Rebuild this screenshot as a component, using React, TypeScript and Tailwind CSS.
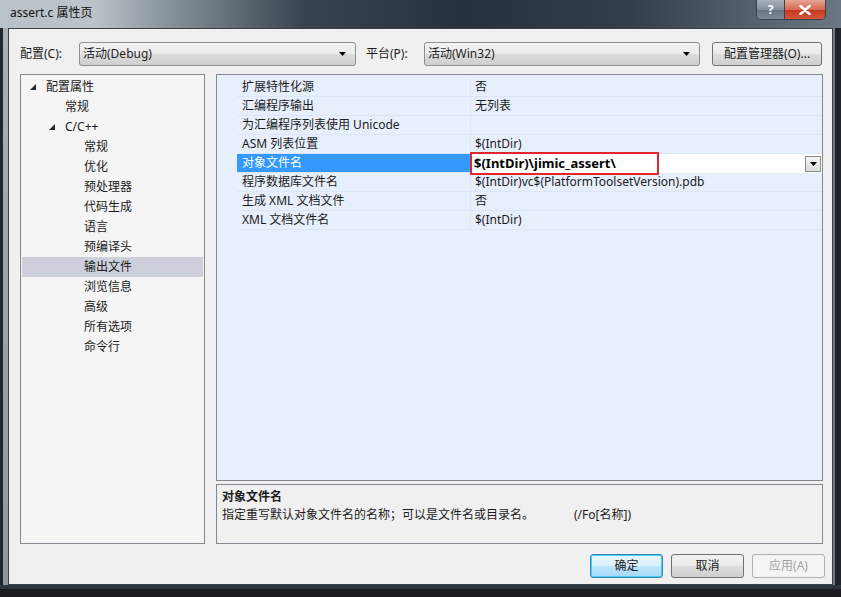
import React from 'react';

const font = { fontFamily: '"Noto Sans", "Noto Sans CJK SC", sans-serif' };

type TreeItem = { label: string; indent: number; arrow?: boolean; selected?: boolean };

const tree: TreeItem[] = [
  { label: '配置属性', indent: 0, arrow: true },
  { label: '常规', indent: 1 },
  { label: 'C/C++', indent: 1, arrow: true },
  { label: '常规', indent: 2 },
  { label: '优化', indent: 2 },
  { label: '预处理器', indent: 2 },
  { label: '代码生成', indent: 2 },
  { label: '语言', indent: 2 },
  { label: '预编译头', indent: 2 },
  { label: '输出文件', indent: 2, selected: true },
  { label: '浏览信息', indent: 2 },
  { label: '高级', indent: 2 },
  { label: '所有选项', indent: 2 },
  { label: '命令行', indent: 2 },
];

const rows: [string, string][] = [
  ['扩展特性化源', '否'],
  ['汇编程序输出', '无列表'],
  ['为汇编程序列表使用 Unicode', ''],
  ['ASM 列表位置', '$(IntDir)'],
  ['对象文件名', '$(IntDir)\\jimic_assert\\'],
  ['程序数据库文件名', '$(IntDir)vc$(PlatformToolsetVersion).pdb'],
  ['生成 XML 文档文件', '否'],
  ['XML 文档文件名', '$(IntDir)'],
];

function Arrow({ className = '' }: { className?: string }) {
  return (
    <svg width="7" height="4" viewBox="0 0 7 4" className={className}>
      <path d="M0 0 H7 L3.5 4 Z" fill="#000" />
    </svg>
  );
}

function Combo({ text, width }: { text: string; width: string }) {
  return (
    <div
      className={`${width} h-6 flex items-center justify-between pl-[3px] pr-[9px] rounded-[3px] border border-[#8e8f8f] bg-[linear-gradient(#f2f2f2,#ebebeb_50%,#dddddd_51%,#cfcfcf)] text-[12px] text-[#1e1e1e]`}
    >
      <span>{text}</span>
      <Arrow />
    </div>
  );
}

function TreeArrow() {
  return (
    <svg width="6" height="6" viewBox="0 0 6 6">
      <path d="M6 0 V6 H0 Z" fill="#262626" />
    </svg>
  );
}

export default function App() {
  return (
    <div style={font} className="w-[841px] h-[597px] bg-[#1f252b] flex flex-col overflow-hidden text-[12px] text-[#1b1b1b]">
      {/* title bar */}
      <div className="h-[28px] flex shrink-0 bg-[linear-gradient(90deg,#b9c1c9_0%,#bcc3ca_11%,#7d8891_22%,#3a444e_36%,#27313b_55%,#333e49_75%,#56626d_90%,#6b7782_100%)]">
        <div className="pl-[10px] pt-[4px] text-[12px] text-[#111]">assert.c 属性页</div>
        <div className="flex-1" />
        <div className="flex h-[20px] mr-[15px] rounded-b-[5px] overflow-hidden border border-t-0 border-[#3b4148]">
          <div className="w-[28px] flex items-center justify-center bg-[linear-gradient(#a9b2bb,#848f9a_50%,#66717c_51%,#7e8a96)] text-white font-bold text-[12px] border-r border-[#3b4148]">
            ?
          </div>
          <div className="w-[40px] flex items-center justify-center bg-[linear-gradient(#e4a493,#d66a52_50%,#c5371c_51%,#d6563a)]">
            <svg width="12" height="10" viewBox="0 0 12 10">
              <path d="M1.5 1 L10.5 9 M10.5 1 L1.5 9" stroke="#fff" strokeWidth="2.6" strokeLinecap="round" />
            </svg>
          </div>
        </div>
      </div>

      <div className="flex h-[557px] shrink-0">
        {/* left frame */}
        <div className="w-[8px] flex">
          <div className="w-[3px] bg-[#20262c]" />
          <div className="w-[5px] bg-[linear-gradient(#a8b0b8,#8d979f)]" />
        </div>

        {/* client area */}
        <div className="w-[825px] bg-[#f0f0f0] border border-[#3a4047] flex flex-col">
          <div className="flex items-center mt-[13px] h-6 pl-[11px]">
            <span className="w-[59px]">配置(C):</span>
            <Combo text="活动(Debug)" width="w-[277px]" />
            <span className="ml-[10px] w-[58px]">平台(P):</span>
            <Combo text="活动(Win32)" width="w-[276px]" />
            <button className="ml-[12px] w-[110px] h-6 rounded-[3px] border border-[#707070] bg-[linear-gradient(#f2f2f2,#ebebeb_50%,#dddddd_51%,#cfcfcf)] text-[12px]">
              配置管理器(O)...
            </button>
          </div>

          <div className="flex mt-[8px] pl-[11px] h-[470px]">
            {/* tree */}
            <div className="w-[185px] h-full border border-[#828790] bg-[#f5f5f5] pt-[2px] px-[1px]">
              {tree.map((t, i) => (
                <div
                  key={i}
                  className={`h-[20px] flex items-center ${t.selected ? 'bg-[#cdd0da]' : ''}`}
                  style={{ paddingLeft: 8 + t.indent * 19 }}
                >
                  <span className="w-[15px] flex items-center">{t.arrow ? <TreeArrow /> : null}</span>
                  <span className="ml-[1px]">{t.label}</span>
                </div>
              ))}
            </div>

            {/* right side */}
            <div className="ml-[11px] w-[607px] flex flex-col">
              <div className="h-[408px] border border-[#828790] bg-[#e7effd] pt-[3px]">
                {rows.map(([name, value], i) => {
                  const sel = i === 4;
                  return (
                    <div key={i} className="h-[19px] flex">
                      <div className="w-[20px] bg-[#e7effd]" />
                      <div
                        className={`w-[233px] flex items-center pl-[5px] border-b border-[#dce6f7] ${sel ? 'bg-[#3399ff] text-white' : ''}`}
                      >
                        {name}
                      </div>
                      {sel ? (
                        <div className="flex-1 flex items-center bg-white relative">
                          <div className="absolute left-0 top-[-2px] w-[189px] h-[23px] border-2 border-[#e3262e]" />
                          <span className="pl-[4px] font-bold text-[13px] text-black">{value}</span>
                          <div className="flex-1" />
                          <div className="w-[16px] h-[16px] mr-[1px] border border-[#8c8c8c] bg-[linear-gradient(#f4f4f4,#dcdcdc)] flex items-center justify-center">
                            <Arrow />
                          </div>
                        </div>
                      ) : (
                        <div className="flex-1 flex items-center pl-[4px] border-l border-[#dce6f7] border-b">{value}</div>
                      )}
                    </div>
                  );
                })}
              </div>

              <div className="mt-[3px] h-[60px] border border-[#828790] bg-[#f0f0f0] px-[5px] pt-[3px]">
                <div className="font-bold leading-[18px]">对象文件名</div>
                <div className="flex leading-[18px]">
                  <span className="w-[352px]">指定重写默认对象文件名的名称；可以是文件名或目录名。</span>
                  <span>(/Fo[名称])</span>
                </div>
              </div>
            </div>
          </div>

          <div className="flex justify-end gap-[8px] mt-[10px] pr-[7px]">
            <button className="w-[73px] h-[24px] rounded-[3px] border border-[#3c7fb1] shadow-[inset_0_0_0_1px_#48d0fd] bg-[linear-gradient(#eaf6fd,#d9f0fc_50%,#bee6fd_51%,#a7d9f5)]">
              确定
            </button>
            <button className="w-[73px] h-[24px] rounded-[3px] border border-[#707070] bg-[linear-gradient(#f2f2f2,#ebebeb_50%,#dddddd_51%,#cfcfcf)]">
              取消
            </button>
            <button className="w-[73px] h-[24px] rounded-[3px] border border-[#adb2b5] bg-[#f4f4f4] text-[#a3a3a3]">
              应用(A)
            </button>
          </div>
        </div>

        {/* right frame */}
        <div className="w-[8px] flex">
          <div className="w-[2px] bg-[#6f7a84]" />
          <div className="w-[6px] bg-[#1d2329]" />
        </div>
      </div>

      <div className="h-[4px] bg-[#2d353d]" />
      <div className="flex-1 bg-[#1a1d21]" />
    </div>
  );
}
